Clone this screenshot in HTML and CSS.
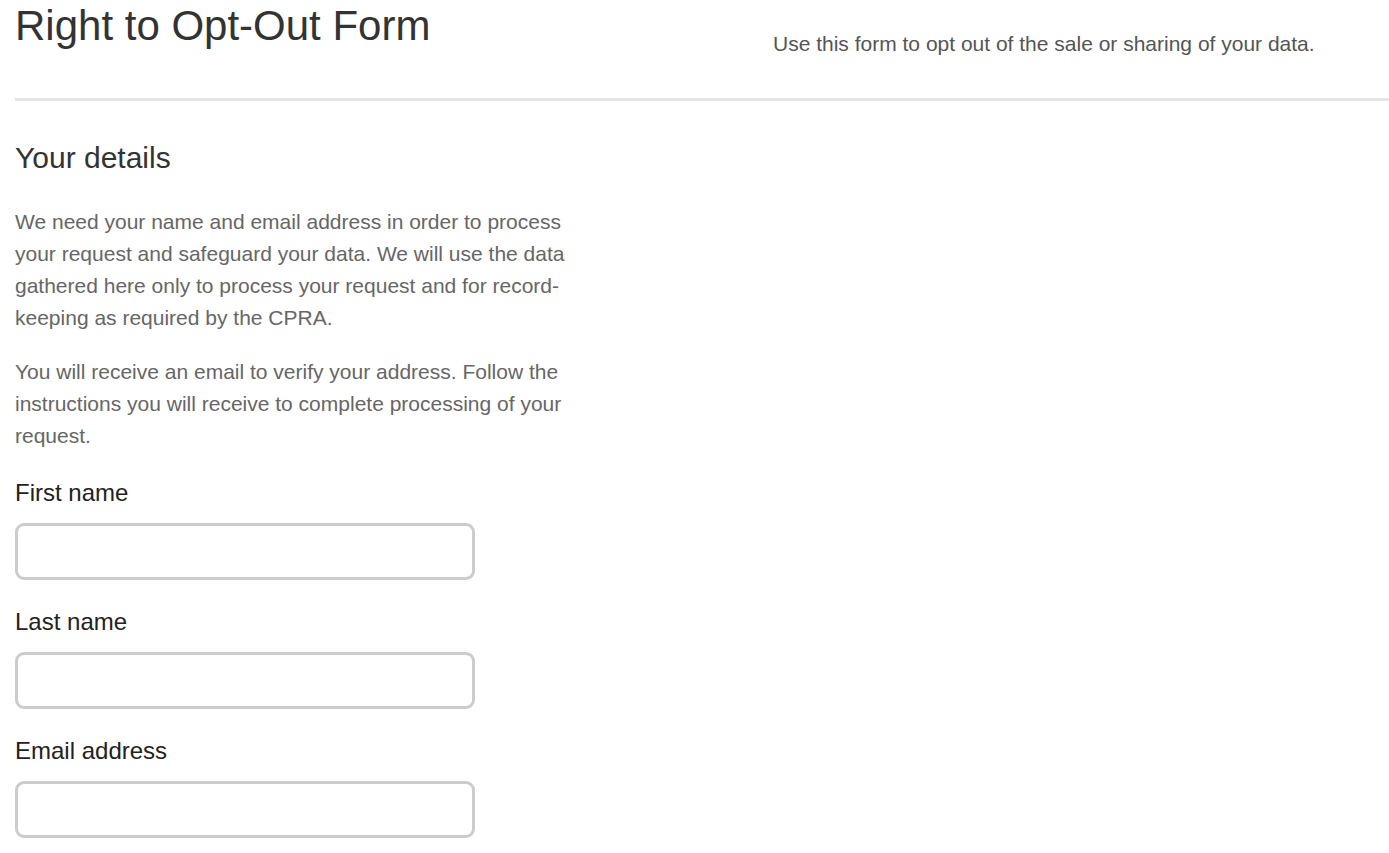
FILE: index.html
```html
<!DOCTYPE html>
<html lang="en">
<head>
<meta charset="utf-8">
<title>Right to Opt-Out Form</title>
<link rel="stylesheet" href="styles.css">
</head>
<body>
<div class="page">
  <header class="header">
    <h1 class="title">Right to Opt-Out Form</h1>
    <p class="subtitle">Use this form to opt out of the sale or sharing of your data.</p>
  </header>
  <main class="content">
    <h2 class="section-title">Your details</h2>
    <p class="text">We need your name and email address in order to process your request and safeguard your data. We will use the data gathered here only to process your request and for record-keeping as required by the CPRA.</p>
    <p class="text">You will receive an email to verify your address. Follow the instructions you will receive to complete processing of your request.</p>
    <form class="form">
      <div class="field">
        <label class="label" for="fn">First name</label>
        <input class="input" id="fn" type="text">
      </div>
      <div class="field">
        <label class="label" for="ln">Last name</label>
        <input class="input" id="ln" type="text">
      </div>
      <div class="field">
        <label class="label" for="em">Email address</label>
        <input class="input" id="em" type="email">
      </div>
    </form>
  </main>
</div>
</body>
</html>
```
FILE: styles.css
```css
html, body {
  margin: 0;
  padding: 0;
  background: #fff;
}
body {
  font-family: "Liberation Sans", Arial, sans-serif;
  color: #333;
}
.page {
  padding-left: 15px;
}
.header {
  display: flex;
  align-items: flex-start;
  border-bottom: 3px solid #e5e5e5;
  height: 101px;
  box-sizing: border-box;
}
.title {
  margin: 3px 0 0 0;
  width: 758px;
  font-size: 42px;
  font-weight: normal;
  line-height: 46px;
  color: #333;
}
.subtitle {
  margin: 31px 0 0 0;
  font-size: 21px;
  line-height: 26px;
  color: #555;
}
.content {
  padding-top: 37px;
  width: 570px;
}
.section-title {
  margin: 0 0 28px 0;
  font-size: 30px;
  font-weight: normal;
  line-height: 40px;
  color: #333;
}
.text {
  margin: 0 0 22px 0;
  font-size: 21px;
  line-height: 32px;
  color: #666;
}
.form {
  display: flex;
  flex-direction: column;
  gap: 28px;
  padding-top: 5px;
}
.field {
  display: flex;
  flex-direction: column;
  gap: 16px;
}
.label {
  font-size: 24px;
  line-height: 28px;
  color: #222;
}
.input {
  width: 460px;
  height: 57px;
  box-sizing: border-box;
  border: 3px solid #ccc;
  border-radius: 9px;
  padding: 0 12px;
  font-size: 18px;
  font-family: inherit;
  background: #fff;
  margin: 0;
}
```
